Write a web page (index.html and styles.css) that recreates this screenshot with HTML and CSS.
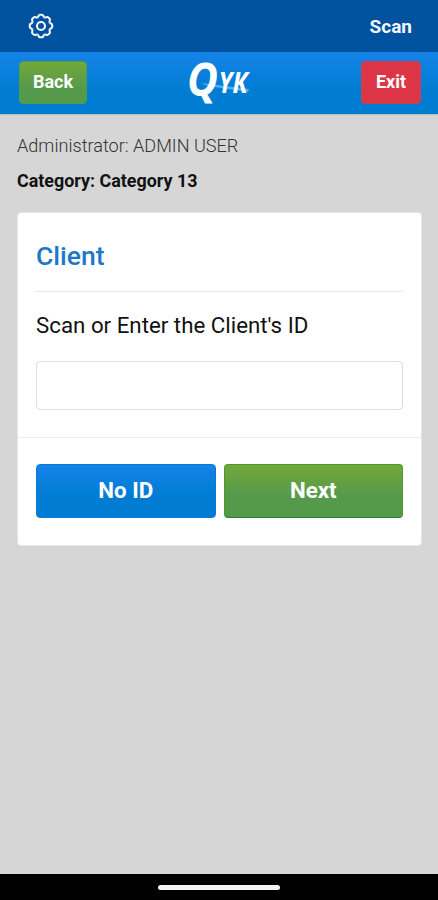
FILE: index.html
```html
<!DOCTYPE html>
<html lang="en">
<head>
<meta charset="utf-8">
<title>Client</title>
<link rel="stylesheet" href="styles.css">
</head>
<body>
<header class="topbar">
  <svg class="gear" viewBox="-13 -13 26 26" width="26" height="26" aria-label="Settings">
    <defs><path id="tooth" d="M-3.56-8.6C-2.3-9.1-2.5-11.2-1-11.2H1C2.5-11.2 2.3-9.1 3.56-8.6"/></defs>
    <use href="#tooth"/>
    <use href="#tooth" transform="rotate(45)"/>
    <use href="#tooth" transform="rotate(90)"/>
    <use href="#tooth" transform="rotate(135)"/>
    <use href="#tooth" transform="rotate(180)"/>
    <use href="#tooth" transform="rotate(225)"/>
    <use href="#tooth" transform="rotate(270)"/>
    <use href="#tooth" transform="rotate(315)"/>
    <circle r="4"/>
  </svg>
  <span class="scan">Scan</span>
</header>
<nav class="navbar">
  <button class="btn back">Back</button>
  <svg class="logo" viewBox="0 0 66 48" width="66" height="48">
    <path class="swoosh" d="M15 24L63 30L62 33L22 27Z"/>
    <text class="q" x="1" y="37" textLength="31" lengthAdjust="spacingAndGlyphs">Q</text>
    <text class="yk" x="32.5" y="34" textLength="29" lengthAdjust="spacingAndGlyphs">YK</text>
  </svg>
  <button class="btn exit">Exit</button>
</nav>
<main>
  <p class="admin">Administrator: ADMIN USER</p>
  <p class="category">Category: Category 13</p>
  <section class="card">
    <div class="card-body">
      <h1>Client</h1>
      <label for="client-id">Scan or Enter the Client's ID</label>
      <input id="client-id" type="text">
    </div>
    <div class="card-footer">
      <button class="btn no-id">No ID</button>
      <button class="btn next">Next</button>
    </div>
  </section>
</main>
<footer class="system-bar"><div class="handle"></div></footer>
</body>
</html>
```
FILE: styles.css
```css
* { box-sizing: border-box; }
body {
  margin: 0;
  height: 900px;
  display: flex;
  flex-direction: column;
  background: #d6d6d6;
  font-family: Roboto, "Liberation Sans", sans-serif;
  color: #111;
  overflow: hidden;
}
.topbar {
  height: 52px;
  padding: 0 26px 0 28px;
  display: flex;
  align-items: center;
  justify-content: space-between;
  background: #00519e;
}
.gear {
  fill: none;
  stroke: #f2f8ff;
  stroke-width: 2.1;
}
.scan {
  color: #f4f8ff;
  font-size: 19px;
  font-weight: 700;
  line-height: 24px;
  padding-top: 2px;
}
.navbar {
  height: 62px;
  padding: 0 17px 0 19px;
  display: flex;
  align-items: center;
  justify-content: space-between;
  background: linear-gradient(#1683e9, #007dd3 60%);
  box-shadow: 0 1px 1px #b9bec0;
}
.btn {
  border: 1px solid;
  border-radius: 4px;
  padding: 0 0 2px;
  color: #fff;
  font-family: inherit;
  font-weight: 700;
}
.back, .exit {
  height: 43px;
  margin-top: -2px;
  font-size: 18px;
}
.back {
  width: 68px;
  border-color: #4fa044;
  background: linear-gradient(#73a83a, #55994b 65%);
}
.exit {
  width: 60px;
  border-color: #c44460;
  background: #dc3545;
}
.logo {
  margin-left: -11px;
  overflow: visible;
  fill: #fff;
  font-family: "Open Sans", sans-serif;
  font-style: italic;
}
.swoosh { fill: #8fd0f5; opacity: .6; }
.q { font-size: 46px; font-weight: 700; }
.yk { font-size: 28px; font-weight: 700; }
main {
  flex: 1;
  padding: 20px 17px 0;
}
p {
  margin: 0;
  font-size: 18px;
  line-height: 24px;
}
.admin {
  color: #333;
  font-weight: 300;
  font-size: 18.1px;
}
.category {
  margin-top: 11px;
  font-size: 17.9px;
  font-weight: 700;
}
.card {
  margin-top: 19px;
  height: 334px;
  width: 405px;
  border: 1px solid #e6e6e6;
  border-radius: 4px;
  background: #fff;
}
.card-body {
  height: 225px;
  padding: 24px 18px 0;
  border-bottom: 1px solid #ebebeb;
}
h1 {
  margin: 0;
  height: 55px;
  border-bottom: 1px solid #e8e8e8;
  color: #1d78ca;
  font-size: 26.5px;
  font-weight: 500;
  line-height: 38px;
}
label {
  display: block;
  margin-top: 18px;
  font-size: 22.3px;
  line-height: 30px;
}
input {
  display: block;
  margin-top: 21px;
  width: 100%;
  height: 49px;
  border: 1px solid #dedede;
  border-radius: 4px;
  background: #fff;
}
.card-footer {
  padding: 26px 18px 0;
  display: grid;
  grid-template-columns: 1fr 1fr;
  gap: 8px;
}
.no-id, .next {
  height: 54px;
  font-size: 22.3px;
}
.no-id {
  border-color: #0878db;
  background: linear-gradient(#1683e9, #007dd3 60%);
}
.next {
  border-color: #479d28 #479d28 #2c8231;
  background: linear-gradient(#73a83a, #55994b 60%);
}
.system-bar {
  height: 26px;
  display: flex;
  justify-content: center;
  align-items: center;
  background: #000;
}
.handle {
  width: 122px;
  height: 5px;
  border-radius: 3px;
  background: #f3f3f3;
}
```
